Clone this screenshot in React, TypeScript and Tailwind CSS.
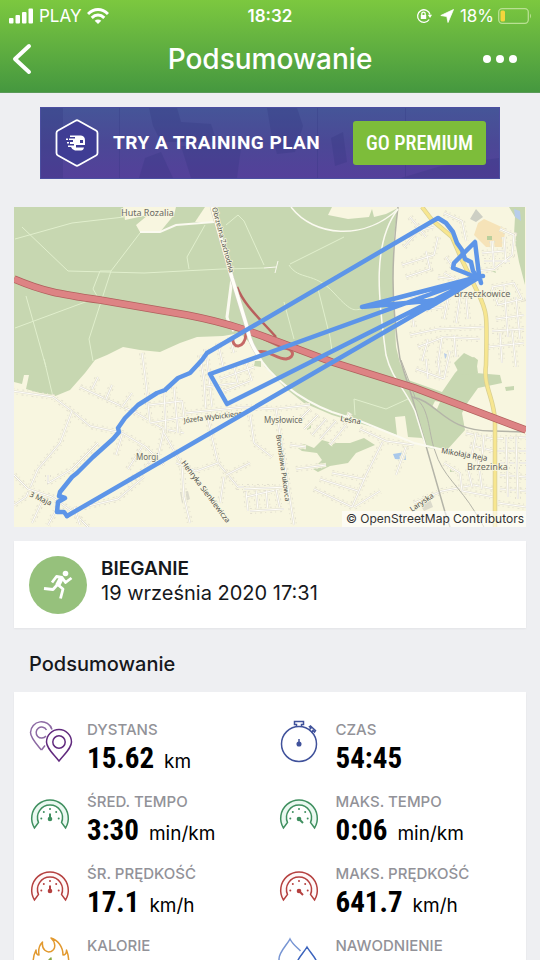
import type { ReactNode } from 'react';

const HOUSES = [
  // west, around Morgi
  'M-2 184 L39 190 L58 204 L76 219 L108 226 L132 240 L150 258',
  'M58 204 L46 236 L24 262 L12 290 L0 298',
  'M0 268 L14 282 L38 290 L60 306 L76 322',
  'M66 180 L92 192 L122 206 L150 222 L170 226',
  'M78 182 L84 170 M92 192 L98 178 M108 200 L118 186',
  'M128 146 L132 176 L136 216',
  'M135 198 L168 194 L170 210 L136 216 M150 184 L152 226 M160 180 L164 226',
  'M34 268 L34 276 L58 262 L84 236',
  'M102 248 L108 228 M114 262 L128 240 M126 268 L142 246',
  'M150 222 L143 254 L112 276 M150 226 L168 258 L170 290',
  'M70 300 L104 292 L130 270',
  'M60 300 L66 318 M44 300 L34 318 M30 290 L18 316',
  // middle
  'M186 148 L190 174 L192 204 L204 256 L224 280 L260 280',
  'M192 142 L198 200 M204 136 L210 164 M216 130 L220 146',
  'M192 180 L222 176 M206 172 L240 160 M210 184 L236 174 M220 160 L224 176 M232 156 L238 174',
  'M172 206 L230 200 L262 202 L296 198',
  'M236 208 L240 236 L258 250',
  'M204 256 L182 264 L162 256 M212 268 L236 256',
  'M262 202 L268 240 L274 280 L280 318',
  'M296 202 L284 214 M304 208 L290 222 M312 212 L298 228 M322 214 L306 232 M332 218 L316 238',
  'M282 262 L312 258 M276 238 L292 240',
  'M232 290 L274 280 M232 284 L234 304 M242 282 L244 304 M252 282 L254 304 M262 282 L266 302',
  'M230 282 L274 280 M236 304 L270 302',
  'M370 232 L352 268 L338 300 M300 282 L338 300 M306 272 L344 284 M318 266 L350 272 M340 300 L366 284',
  'M346 222 L372 234 L400 238 M330 216 L336 206 M392 240 L382 268',
  'M170 290 L176 316 M210 270 L206 296',
  'M400 296 L428 284 L460 278 L480 282',
  // north east
  'M390 40 L404 24 L420 20 M388 58 L420 48 L424 30 M392 70 L416 62 L412 44',
  'M396 90 L420 84 L444 78 M400 120 L398 104 L430 100',
  'M430 112 L434 92 M442 116 L446 90 M454 112 L452 90 M396 128 L424 122 L470 120',
  'M404 140 L430 130 L466 132 M408 154 L414 132 M424 156 L428 130 M440 128 L442 150',
  'M462 64 L480 62 L498 48 L500 28 L486 22 M468 46 L490 44 M470 54 L496 54 M478 34 L480 60 M490 30 L492 56',
  'M430 66 L444 74 M432 50 L440 62 M424 70 L440 72',
  'M478 80 L500 76 L508 92 L484 98 L478 80 M490 78 L494 130 M502 90 L506 132 M482 112 L510 108 M478 124 L510 122',
  'M474 140 L510 136 M486 126 L488 156 M498 124 L502 160',
  'M430 6 L448 14 L452 34 M396 10 L412 30',
  'M402 162 L430 172 M412 152 L414 172 M424 154 L426 168 M436 144 L430 172',
  // south east
  'M452 226 L480 232 L512 230 M456 238 L480 244 L512 244 M486 256 L512 256 M486 268 L512 270 M486 282 L512 284',
  'M462 226 L458 248 M470 228 L468 250 M492 230 L494 290 M502 230 L504 292',
  'M430 256 L446 266 L448 284 L480 290 M454 262 L458 280 M464 252 L468 282',
  'M484 296 L512 300',
];

const PATHS_IN_FOREST = [
  'M1 32 L58 16 L110 10',
  'M126 26 L97 64 L84 104 L75 132 L79 154',
  'M97 64 L86 64 L79 82 L86 94',
  'M8 20 L54 64 L130 66 L208 62 L250 61',
  'M12 89 L32 160',
  'M1 121 L74 94',
  'M191 18 L173 50 L175 62',
  'M212 18 L224 8 L230 14 L250 58',
  'M275 58 C285 74 300 64 320 86 S340 102 350 102',
  'M270 95 L280 132 M304 82 L316 130 L318 144',
  'M276 57 L330 30',
  'M341 208 L340 192 L372 202 L394 192',
  'M30 152 L39 190',
];

const ROUTE = [
  'M53 309 L464 71 L213 197 L196 167 L464 70 L348 100 L414 94 L426 92 L414 101 L464 71',
  'M53 309 L50 305 L43 305 L44 295 L51 291 L45 289 L46 285 L58 270 L63 266 L79 250 L99 232 L105 225 L104 221 L111 211 L124 198 L143 186 L151 183 L164 171 L176 166 L188 153 L193 146 L424 11 L432 16 L439 25 L443 36 L448 43 L451 52 L457 55 L459 64 L464 71',
  'M464 71 L439 61 L440 56 L461 35 L465 68 L467 76 M458 70 L469 69',
];

function RouteMap() {
  return (
    <svg viewBox="0 0 512 320" className="block w-full" role="img" aria-label="Mapa trasy" fontFamily="'Noto Sans', sans-serif">
      <rect width="512" height="320" fill="#f8f6e0" />

      <g fill="#c7d7b1">
        <path d="M0 0 H384 L380 30 L379 80 L382 140 L386 156 L394 173 L428 185 L441 166 L453 153 L460 150 L464 153 L462 166 L486 168 L488 176 L464 181 L454 195 L448 206 L451 223 L433 243 L414 241 L408 231 L394 230 L391 209 L381 210 L383 228 L368 223 L318 208 L290 196 L271 181 L251 160 L243 146 L236 136 L226 126 L209 129 L183 130 L166 136 L146 145 L126 143 L109 140 L93 148 L81 153 L71 166 L56 183 L39 190 L12 182 L15 168 L10 168 L8 177 L0 175 Z" />
        <path d="M281 239 L290 237 L300 241 L308 233 L318 236 L336 236 L350 231 L361 238 L342 246 L334 256 L316 259 L304 265 L299 262 L308 253 L303 246 L288 244 Z" />
        <path d="M495 0 L501 10 L500 28 L505 55 L511 78 V0 Z" />
        <path d="M440 156 L450 146 L462 152 L464 166 L446 168 Z" />
        <path d="M241 154 H247 V160 L240 159 Z M293 219 L297 216 V221 L293 223 Z M436 260 H441 V265 H436 Z" />
        <path d="M474 63 L480 60 L482 66 Z M491 180 L500 179 L500 183 L492 184 Z" />
      </g>
      <g fill="#f8f6e0">
        <path d="M109 0 L111 13 L134 8 L122 18 L126 25 L146 25 L160 8 L162 0 Z" />
        <path d="M191 0 L181 15 L201 15 L197 0 Z" />
        <path d="M318 0 L314 8 L334 12 L355 10 L358 2 L360 10 L372 7 L384 1 V0 Z" />
        <path d="M421 194 L426 195 L423 202 L418 200 Z" />
      </g>
      <path d="M464 16 L470 12 L492 22 L488 40 L472 40 L460 28 Z" fill="#f6e3b8" />
      <path d="M473 29 L478 29 L478 33 L473 33 Z" fill="#b9cf9c" />
      <path d="M456 12 L462 2 L469 10 L462 15 Z" fill="#cdcfc4" />
      <path d="M379 247 L391 245 L392 253 L381 252 Z" fill="#a9c8ea" />
      <path d="M430 146 L434 148 L431 152 Z M500 2 L506 4 L507 14 L501 10 Z" fill="#b8cdea" />
      <path d="M166 285 L174 284 L176 292 L168 296 Z M405 296 L416 292 L419 300 L410 304 Z" fill="#dbdacb" />

      <g fill="none" stroke="#e1efcd" strokeWidth="1">
        {PATHS_IN_FOREST.map((d) => (
          <path key={d} d={d} />
        ))}
      </g>

      <g fill="none">
        {HOUSES.map((d) => (
          <g key={d}>
            <path d={d} stroke="#e3e0d0" strokeWidth="6" strokeDasharray="2 3 1 4" />
            <path d={d} stroke="#f8f6e0" strokeWidth="4" />
            <path d={d} stroke="#dfdcd2" strokeWidth="2" />
            <path d={d} stroke="#fffefa" strokeWidth="1" />
          </g>
        ))}
      </g>

      {/* railways */}
      <g fill="none" stroke="#b4b4a8" strokeWidth="1">
        <path d="M384 0 C378 50 376 90 386 152 L398 190 L431 305 L436 320" strokeWidth="1.5" />
        <path d="M398 190 C424 194 430 225 480 224 L511 225" strokeWidth="1.5" />
        <path d="M398 190 C416 196 414 226 421 244 C428 268 446 280 461 305 L470 320" />
        <path d="M387 153 L401 190" />
      </g>
      <g fill="none" stroke="#fbfaf0" strokeWidth="2">
        <path d="M277 0 C300 30 350 34 384 2" strokeWidth="1.5" />
        <path d="M384 2 C358 36 364 90 372 148 C378 172 390 180 401 204 L412 240" strokeWidth="1.5" />
        <path d="M243 146 C254 168 284 192 318 205 L346 214 L400 236 L430 243 L470 252" />
        <path d="M126 25 H146 L162 18 L200 15" />
        <path d="M250 61 L262 60 M261 66 L264 54" strokeWidth="1" />
      </g>

      <g fill="none" strokeLinejoin="round">
        <path d="M408 0 L418 13 L438 30 L448 53 L464 86 C474 106 473 110 472 158 C469 180 480 190 481 214 V320" stroke="#d8cf94" strokeWidth="4.5" />
        <path d="M408 0 L418 13 L438 30 L448 53 L464 86 C474 106 473 110 472 158 C469 180 480 190 481 214 V320" stroke="#f7e68f" strokeWidth="3" />
      </g>

      {/* motorway and its ramps */}
      <g fill="none">
        <path d="M218 71 L213 110 Q215 118 220 124" stroke="#fbfaf0" strokeWidth="3" />
        <path d="M223 80 C230 98 246 112 262 130" stroke="#b85f5c" strokeWidth="2.5" />
        <path d="M219 130 C217 142 231 143 232 127" stroke="#c56966" strokeWidth="3" />
        <path d="M243 145 C254 142 262 152 272 152 C282 150 280 142 270 141 L250 132" stroke="#c56966" strokeWidth="3" />
        <path d="M0 72 C28 84 44 87 86 93 L173 108 C224 118 240 126 318 155 L401 181 L512 223" stroke="#b0605d" strokeWidth="7.5" />
        <path d="M0 72 C28 84 44 87 86 93 L173 108 C224 118 240 126 318 155 L401 181 L512 223" stroke="#dd8384" strokeWidth="6" />
        <path d="M198 0 L218 71 L233 120 Q236 138 246 150" stroke="#d3d2c6" strokeWidth="4.5" />
        <path d="M198 0 L218 71 L233 120 Q236 138 246 150" stroke="#fffef8" strokeWidth="3.5" />
      </g>

      <g fill="#4c4c48" stroke="#f8f6e0" strokeWidth="1.5" paintOrder="stroke" fontSize="7.5">
        <text transform="translate(198 1) rotate(75)" fontSize="7">Obrzeżna Zachodnia</text>
        <text transform="translate(170 216) rotate(-7)" fontSize="7">Józefa Wybickiego</text>
        <text transform="translate(326 214) rotate(9)">Leśna</text>
        <text transform="translate(167 256) rotate(53)">Henryka Sienkiewicza</text>
        <text transform="translate(262 228) rotate(82)" fontSize="7">Bronisława Pukowca</text>
        <text transform="translate(15 289) rotate(25)">3 Maja</text>
        <text transform="translate(427 246) rotate(10)">Mikołaja Reja</text>
        <text transform="translate(398 305) rotate(-34)">Laryska</text>
      </g>
      <g fill="#6a6a64" stroke="#f8f6e0" strokeWidth="1.5" paintOrder="stroke" fontSize="9">
        <text x="107" y="9">Huta Rozalia</text>
        <text x="122" y="253" fontSize="8">Morgi</text>
        <text x="250" y="216" fontSize="8">Mysłowice</text>
        <text x="440" y="90">Brzęczkowice</text>
        <text x="453" y="263">Brzezinka</text>
      </g>

      <g fill="none" stroke="#5d95e8" strokeWidth="4.5" strokeLinejoin="round" strokeLinecap="round">
        {ROUTE.map((d) => (
          <path key={d} d={d} />
        ))}
      </g>
    </svg>
  );
}

function GaugeIcon({ tint, fast }: { tint: 'green' | 'red'; fast?: boolean }) {
  const color = tint === 'green' ? '#3f8f5f' : '#b5403f';
  return (
    <svg viewBox="0 0 44 44" className="size-11" fill="none" stroke={color} strokeWidth="1.5" strokeLinejoin="miter">
      <path d="M5.500 36 A18.300 18.300 0 1 1 36.500 36 L32.500 30.500 A12.500 12.500 0 1 0 9.500 30.500 Z" fill={tint === 'green' ? '#eaf8f0' : '#fff8f8'} />
      <g fill={color} stroke="none">
        <circle cx="12.300" cy="26.500" r="1" />
        <circle cx="14.800" cy="20" r="1" />
        <circle cx="21" cy="17" r="1" />
        <circle cx="27.200" cy="20" r="1" />
        <circle cx="29.700" cy="26.500" r="1" />
        <circle cx="21" cy="27" r="2.300" />
      </g>
      <path d={fast ? 'M21 27 L25 31' : 'M21 27 V21.500'} strokeWidth="2" />
    </svg>
  );
}

function PinsIcon() {
  return (
    <svg viewBox="0 0 44 44" className="size-11" fill="none" strokeWidth="1.5">
      <g stroke="#8c69a3">
        <path d="M12.500 30 C7 23.500 1.500 18 1.500 12.500 A11 11 0 0 1 23 9.500" />
        <path d="M12.500 30 L16 25.500 M17 16 A5.500 5.500 0 1 1 17.500 10" />
      </g>
      <g stroke="#612a7e">
        <path d="M30 41 C23.500 33 17.500 28 17.500 22 A12.500 12.500 0 0 1 42.500 22 C42.500 28 36.500 33 30 41 Z" />
        <circle cx="30" cy="22" r="6.200" />
      </g>
    </svg>
  );
}

function StopwatchIcon() {
  return (
    <svg viewBox="0 0 44 44" className="size-11" fill="none" stroke="#40529b" strokeWidth="1.5">
      <circle cx="21" cy="24" r="17.500" />
      <path d="M18.500 6.500 V4.500 H16.500 V1.500 H25.500 V4.500 H23.500 V6.500" />
      <path d="M31 10 L33 8 L31.500 6.800 L32.500 6 L37.500 10.500 L36.500 12 L35 10.500 L33.500 12.500" />
      <path d="M21 24 V19" />
      <circle cx="21" cy="24" r="1.800" fill="#40529b" />
    </svg>
  );
}

function FlameIcon() {
  return (
    <svg viewBox="0 0 44 44" className="size-11" fill="none" stroke="#e2992f" strokeWidth="1.5" strokeLinejoin="round">
      <path d="M13.500 6 C12.500 14 18 17 22 15.500 C27.500 13 26.500 6 22 2 C29 4 34 11 34 19 C36.500 19 37.500 17 37.500 14 C41 23 40 32 34 38 C30 42 14 42 9 38 C3 32 3 22 7 14 C7 17 8 19 10 19 C9 13 10.500 9 13.500 6 Z" />
      <path d="M17 36 C13 31 16 28 22 22 C21 28 30 30 26 36" stroke="#8aa843" />
    </svg>
  );
}

function DropsIcon() {
  return (
    <svg viewBox="0 0 44 44" className="size-11" fill="none" strokeWidth="1.5">
      <path d="M18 34 C8 36 1 31 1 23 C1 16 9 9 12 3 C15 9 20 12 22.500 15" stroke="#7795d3" />
      <path d="M29 11 C33 18 40 23 40 31 C40 44 18 44 18 31 C18 23 25 18 29 11 Z" stroke="#3c64bd" />
    </svg>
  );
}

type Stat = { label: string; value: string; unit?: string; icon: ReactNode };

const STATS: Stat[] = [
  { label: 'DYSTANS', value: '15.62', unit: 'km', icon: <PinsIcon /> },
  { label: 'CZAS', value: '54:45', icon: <StopwatchIcon /> },
  { label: 'ŚRED. TEMPO', value: '3:30', unit: 'min/km', icon: <GaugeIcon tint="green" /> },
  { label: 'MAKS. TEMPO', value: '0:06', unit: 'min/km', icon: <GaugeIcon tint="green" fast /> },
  { label: 'ŚR. PRĘDKOŚĆ', value: '17.1', unit: 'km/h', icon: <GaugeIcon tint="red" /> },
  { label: 'MAKS. PRĘDKOŚĆ', value: '641.7', unit: 'km/h', icon: <GaugeIcon tint="red" fast /> },
  { label: 'KALORIE', value: '', icon: <FlameIcon /> },
  { label: 'NAWODNIENIE', value: '', icon: <DropsIcon /> },
];

function StatCell({ label, value, unit, icon }: Stat) {
  return (
    <div className="flex h-18 gap-3.5">
      <div className="shrink-0">{icon}</div>
      <div>
        <dt className="text-[15px] leading-5 font-medium text-[#929298]">{label}</dt>
        <dd className="flex items-baseline gap-2.5 leading-9 text-black">
          <span className="font-['Roboto_Condensed','Liberation_Sans_Narrow',Roboto,sans-serif] text-[29px] font-bold">{value}</span>
          {unit && <span className="text-[19px]">{unit}</span>}
        </dd>
      </div>
    </div>
  );
}

function StatusBar() {
  return (
    <div className="grid grid-cols-3 items-center px-2 pt-1 text-[17px] leading-6">
      <div className="flex items-center gap-1.5">
        <svg viewBox="0 0 25 16" className="h-4 w-[25px]" fill="currentColor">
          <rect x="1" y="10" width="4.500" height="5.500" rx="1" />
          <rect x="7.500" y="7" width="4.500" height="8.500" rx="1" />
          <rect x="14" y="4" width="4.500" height="11.500" rx="1" />
          <rect x="20.500" y="0.500" width="4.500" height="15" rx="1" />
        </svg>
        <span>PLAY</span>
        <svg viewBox="0 0 22 16" className="h-4 w-[22px]" fill="none" stroke="currentColor" strokeWidth="3">
          <path d="M1 6 C7 0 15 0 21 6" />
          <path d="M4.700 9.800 C8.500 6.200 13.500 6.200 17.300 9.800" />
          <path d="M11 16 L7.700 12.700 C9.700 11 12.300 11 14.300 12.700 Z" fill="currentColor" stroke="none" />
        </svg>
      </div>
      <div className="text-center font-semibold">18:32</div>
      <div className="flex items-center justify-end gap-1">
        <svg viewBox="0 0 16 16" className="mr-1 size-4" fill="none" stroke="currentColor" strokeWidth="1.300">
          <path d="M13.200 11.500 A6.300 6.300 0 1 1 14 6.500" />
          <path d="M11.800 6.800 H16 L14 10 Z" fill="currentColor" stroke="none" />
          <rect x="4.800" y="7" width="5.400" height="4" fill="currentColor" stroke="none" />
          <path d="M5.800 7 V5.800 A1.700 1.700 0 0 1 9.200 5.800 V7" />
        </svg>
        <svg viewBox="0 0 14 14" className="mr-0.5 size-3.5" fill="currentColor" stroke="currentColor" strokeWidth="0.800" strokeLinejoin="round">
          <path d="M13.500 0.500 L0.800 6.500 L6.800 7.500 L8 13.500 Z" />
        </svg>
        <span>18%</span>
        <svg viewBox="0 0 34 16" className="h-4 w-[34px]" fill="none">
          <rect x="0.700" y="0.700" width="29.600" height="14.600" rx="3.500" stroke="#b9e092" strokeWidth="1.300" />
          <rect x="2.500" y="2.500" width="4.500" height="11" rx="1.500" fill="#f4d63c" />
          <path d="M32 5.500 Q34 8 32 10.500 Z" fill="#b9e092" />
        </svg>
      </div>
    </div>
  );
}

function PremiumBanner() {
  return (
    <section className="relative mx-6.5 flex h-[72px] items-center border border-[#4b4fa0] bg-linear-to-b from-[#455598] via-[#4b4896] to-[#54409a] pr-[13px] pl-3.5">
      {/* faint gym photo behind the text */}
      <svg viewBox="0 0 458 70" preserveAspectRatio="none" className="absolute inset-0 size-full" fill="#2c3079" opacity="0.220">
        <path d="M108 0 L136 0 L140 14 L170 16 L176 34 L120 34 L112 18 Z" />
        <path d="M98 70 L104 50 L120 44 L132 70 Z M140 38 L200 40 L196 70 L150 70 Z" />
        <path d="M226 0 H256 L262 18 L254 44 L236 46 L230 24 Z M290 30 L302 24 L306 54 L294 58 Z" />
        <path d="M360 70 L400 58 L458 50 V70 Z M0 0 H22 V70 H0 Z" />
        <path d="M78 0 H79 V70 H78 Z M364 0 H365 V70 H364 Z M276 0 H277 V70 H276 Z" />
      </svg>
      <svg viewBox="0 0 44 48" className="relative h-12 w-11 shrink-0" fill="none">
        <path d="M20.500 1.700 Q22 .8 23.500 1.700 L41 11.500 Q42.500 12.300 42.500 14 V34 Q42.500 35.700 41 36.500 L23.500 46.300 Q22 47.200 20.500 46.300 L3 36.500 Q1.500 35.700 1.500 34 V14 Q1.500 12.300 3 11.500 Z" fill="#3f3d94" stroke="#fff" strokeWidth="1.800" />
        <g fill="#fff">
          <path d="M15 16.500 H26 Q30 17 30 21.500 V26 H21 V28.500 H29 Q28.500 31.500 26 31.500 H20 Q17 31 16 28 H13 V26.500 H19 V25 H15 V23 H18 V21 H14 V19.500 H20 V18 H15 Z" />
          <path d="M11 19.500 H13 V21 H11 Z M12 23 H14 V24.500 H12 Z" />
        </g>
        <path d="M25 21 H28 V24 H25 Z" fill="#3f3d94" />
      </svg>
      <p className="relative ml-3.5 flex-1 font-[Roboto,sans-serif] text-[19px] font-bold tracking-wide whitespace-nowrap text-white">TRY A TRAINING PLAN</p>
      <button className="relative h-11 w-[133px] rounded-[3px] bg-[#7dbd3a] font-['Roboto_Condensed','Liberation_Sans_Narrow',Roboto,sans-serif] text-xl font-medium whitespace-nowrap text-white">
        GO PREMIUM
      </button>
    </section>
  );
}

export default function App() {
  return (
    <div className="flex h-screen flex-col overflow-hidden bg-[#eeeff2] font-[Inter,sans-serif] text-[#16181c]">
      <header className="shrink-0 border-b border-[#5a9a58] bg-linear-to-b from-[#7cc83f] to-[#45983f] text-white">
        <StatusBar />
        <div className="grid h-16 grid-cols-[1fr_auto_1fr] items-center px-3 pb-0.5">
          <button aria-label="Wstecz" className="w-5">
            <svg viewBox="0 0 20 32" className="h-8 w-5" fill="none" stroke="currentColor" strokeWidth="4" strokeLinecap="round" strokeLinejoin="round">
              <path d="M17 3 L3 16 L17 29" />
            </svg>
          </button>
          <h1 className="text-[28px] leading-9 font-medium">Podsumowanie</h1>
          <button aria-label="Więcej" className="mr-2.5 justify-self-end">
            <svg viewBox="0 0 36 8" className="h-2 w-9" fill="currentColor">
              <circle cx="5" cy="4" r="4" />
              <circle cx="18" cy="4" r="4" />
              <circle cx="31" cy="4" r="4" />
            </svg>
          </button>
        </div>
      </header>

      <main className="flex-1 overflow-y-auto px-3.5 pt-3.5 [scrollbar-width:none]">
        <PremiumBanner />

        <section className="relative mt-7">
          <RouteMap />
          <p className="absolute right-0 bottom-0 bg-white/60 pr-0.5 pl-1 text-xs leading-4 text-[#333]">© OpenStreetMap Contributors</p>
        </section>

        <section className="mt-3.5 flex h-[87px] items-center gap-3.5 bg-white px-[15px] shadow-xs">
          <div className="flex size-[58px] shrink-0 items-center justify-center rounded-full bg-[#96c17c]">
            <svg viewBox="0 0 30 30" className="size-[30px]" fill="none" stroke="#fff" strokeWidth="2.800" strokeLinecap="butt" strokeLinejoin="round">
              <circle cx="22.500" cy="3.500" r="2.800" fill="#fff" stroke="none" />
              <path d="M9 12.500 L13.500 6.500 L19 7.500 L22.500 12.500 L28.500 8" />
              <path d="M18.500 8 L14.500 15.500" strokeWidth="5" />
              <path d="M14 14 L20 19 L17.500 28.500" />
              <path d="M14.500 14.500 L10 19.500 L1 18.500" />
            </svg>
          </div>
          <div className="pb-2">
            <h2 className="text-[19px] leading-[25px] font-semibold">BIEGANIE</h2>
            <p className="text-xl leading-[25px]">19 września 2020 17:31</p>
          </div>
        </section>

        <h2 className="px-[15px] pt-6 pb-4 text-xl leading-6 font-medium">Podsumowanie</h2>

        <dl className="grid grid-cols-2 bg-white pt-7 pl-[15px] shadow-xs">
          {STATS.map((stat) => (
            <StatCell key={stat.label} {...stat} />
          ))}
        </dl>
      </main>
    </div>
  );
}
